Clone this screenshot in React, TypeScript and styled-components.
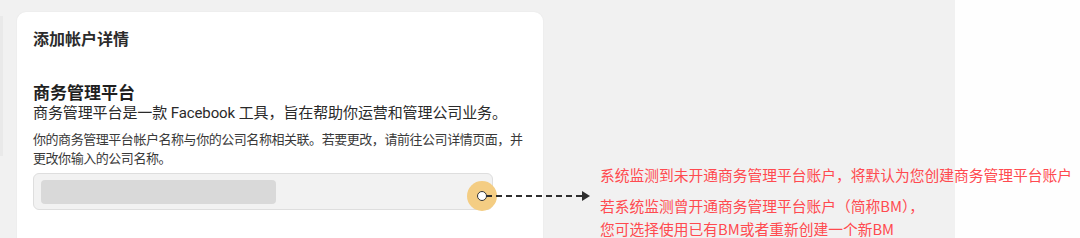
import styled, { createGlobalStyle } from "styled-components";

const GlobalStyle = createGlobalStyle`
    html, body {
        margin: 0;
        padding: 0;
        background: #ffffff;
    }
    body {
        font-family: "Roboto", "Noto Sans CJK SC", sans-serif;
    }
`;

function App() {
    return (
        <>
            <GlobalStyle />
            <Page>
                <Stage>
                    <EdgePanel />
                    <Card>
                        <CardTitle>添加帐户详情</CardTitle>
                        <Section>
                            <Heading>商务管理平台</Heading>
                            <Lead>商务管理平台是一款 Facebook 工具，旨在帮助你运营和管理公司业务。</Lead>
                            <Hint>
                                你的商务管理平台帐户名称与你的公司名称相关联。若要更改，请前往公司详情页面，并
                                <br />
                                更改你输入的公司名称。
                            </Hint>
                            <InputBox>
                                <Masked />
                                <Marker>
                                    <Dot />
                                </Marker>
                            </InputBox>
                        </Section>
                    </Card>
                </Stage>
                <Side />
                <Pointer>
                    <Dashes />
                    <ArrowHead />
                </Pointer>
                <Notes>
                    <Note>系统监测到未开通商务管理平台账户，将默认为您创建商务管理平台账户</Note>
                    <NoteGroup>
                        <Note>若系统监测曾开通商务管理平台账户（简称BM），</Note>
                        <Note>您可选择使用已有BM或者重新创建一个新BM</Note>
                    </NoteGroup>
                </Notes>
            </Page>
        </>
    );
}

const Page = styled.div`
    position: relative;
    display: flex;
    width: 1080px;
    height: 238px;
    overflow: hidden;
`;

const Stage = styled.div`
    width: 955px;
    background: #f1f1f1;
    display: flex;
    align-items: flex-start;
    padding-top: 12px;
    box-sizing: border-box;
`;

const EdgePanel = styled.div`
    width: 3px;
    height: 140px;
    margin-top: 4px;
    background: #e9e9e9;
    margin-right: 14px;
`;

const Side = styled.div`
    flex: 1;
    background: #fefefe;
`;

const Card = styled.div`
    width: 526px;
    height: 260px;
    background: #ffffff;
    border-radius: 9px;
    box-shadow: 0 0 2px rgba(0, 0, 0, 0.06);
    padding: 17px 16px 0 16px;
    box-sizing: border-box;
    color: #1c1e21;
`;

const CardTitle = styled.div`
    font-size: 16px;
    font-weight: 700;
    line-height: 22px;
    color: #2b2b2b;
`;

const Section = styled.div`
    margin-top: 32px;
`;

const Heading = styled.div`
    font-size: 17px;
    font-weight: 700;
    line-height: 21px;
    color: #1f1f1f;
`;

const Lead = styled.div`
    font-size: 15px;
    line-height: 19px;
    color: #2a2a2a;
    letter-spacing: -0.1px;
`;

const Hint = styled.div`
    margin-top: 7px;
    font-size: 13px;
    line-height: 19px;
    letter-spacing: -0.45px;
    color: #3a3a3a;
    width: 500px;
    white-space: nowrap;
`;

const InputBox = styled.div`
    position: relative;
    margin-top: 5px;
    width: 460px;
    height: 37px;
    background: #f2f2f2;
    border: 1px solid #dedede;
    border-radius: 6px;
    box-sizing: border-box;
    display: flex;
    align-items: center;
    padding-left: 7px;
`;

const Masked = styled.div`
    width: 235px;
    height: 24px;
    background: #d9d9d9;
    border-radius: 4px;
`;

const Marker = styled.div`
    position: absolute;
    left: 433px;
    top: 7px;
    width: 30px;
    height: 30px;
    border-radius: 50%;
    background: #f4cd83;
    display: flex;
    align-items: center;
    justify-content: center;
`;

const Dot = styled.div`
    width: 8px;
    height: 8px;
    border-radius: 50%;
    background: #ffffff;
    border: 1.5px solid #333333;
`;

const Pointer = styled.div`
    position: absolute;
    left: 486px;
    top: 191px;
    display: flex;
    align-items: center;
`;

const Dashes = styled.div`
    width: 96px;
    height: 0;
    border-top: 2px dashed #2e2e2e;
`;

const ArrowHead = styled.div`
    width: 0;
    height: 0;
    border-top: 5px solid transparent;
    border-bottom: 5px solid transparent;
    border-left: 8px solid #2e2e2e;
`;

const Notes = styled.div`
    position: absolute;
    left: 600px;
    top: 163px;
    display: flex;
    flex-direction: column;
    gap: 8px;
`;

const NoteGroup = styled.div`
    display: flex;
    flex-direction: column;
`;

const Note = styled.div`
    font-family: "Noto Sans CJK SC", sans-serif;
    font-size: 14.75px;
    line-height: 23px;
    color: #ff4a4f;
    white-space: nowrap;
`;

export default App;
